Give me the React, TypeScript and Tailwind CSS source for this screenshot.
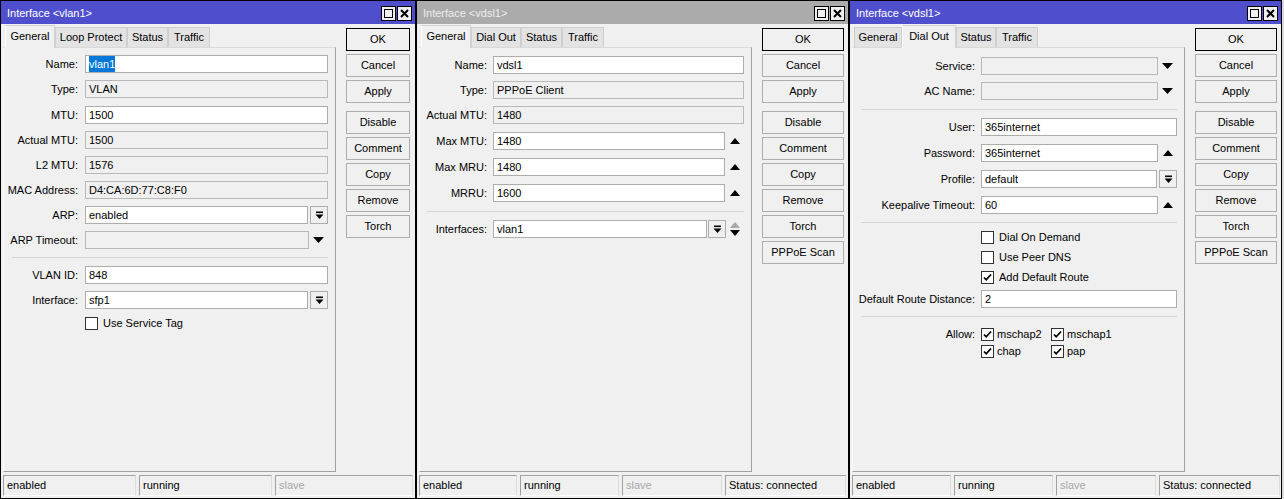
import React from "react";

const FONT = "font-['Liberation_Sans',Arial,sans-serif]";

// small glyphs used by the winbox style fields
function DropIcon() {
  return (
    <svg width="9" height="9" viewBox="0 0 9 9">
      <rect x="1" y="0.5" width="7" height="1.6" fill="#000" />
      <path d="M0.5 3.5h8L4.5 8z" fill="#000" />
    </svg>
  );
}

function DownTri() {
  return (
    <svg width="11" height="6" viewBox="0 0 11 6">
      <path d="M0 0h11L5.5 6z" fill="#000" />
    </svg>
  );
}

function UpTri() {
  return (
    <svg width="10" height="6" viewBox="0 0 10 6">
      <path d="M0 6h10L5 0z" fill="#000" />
    </svg>
  );
}

function UpDown() {
  return (
    <svg width="10" height="14" viewBox="0 0 10 14">
      <path d="M0 6h10L5 0z" fill="#a8a8a8" />
      <path d="M0 8h10L5 14z" fill="#000" />
    </svg>
  );
}

function Check({ on }: { on?: boolean }) {
  return (
    <div className="w-[13px] h-[13px] border border-[#333] bg-white flex items-center justify-center shrink-0">
      {on && (
        <svg width="9" height="9" viewBox="0 0 9 9">
          <path d="M1 4.5l2.2 2.3L8 1.5" stroke="#000" strokeWidth="1.8" fill="none" />
        </svg>
      )}
    </div>
  );
}

type Trail = "none" | "drop" | "tri" | "up" | "dropud";

type FieldProps = {
  label: string;
  value?: string;
  ro?: boolean;
  trail?: Trail;
  sel?: boolean;
  labelW: string;
  gap: string;
  mt: string;
};

function Field({ label, value, ro, trail = "none", sel, labelW, gap, mt }: FieldProps) {
  return (
    <div className={`flex items-center h-[18px] pr-[7px] ${mt}`}>
      <div className={`${labelW} text-right whitespace-nowrap shrink-0`}>{label}:</div>
      <div className={`flex-1 flex items-center ${gap}`}>
        <div
          className={`flex-1 h-[18px] border flex items-center px-[3px] whitespace-nowrap overflow-hidden ${
            ro ? "bg-[#f0f0f0] border-[#b9b9b9]" : "bg-white border-[#adadad]"
          }`}
        >
          {sel ? <span className="bg-[#0078d7] text-white">{value}</span> : value}
        </div>
        {trail === "drop" && (
          <div className="ml-[2px] w-[18px] h-[18px] border border-[#adadad] bg-[#f0f0f0] flex items-center justify-center">
            <DropIcon />
          </div>
        )}
        {trail === "tri" && (
          <div className="w-[19px] flex justify-center">
            <DownTri />
          </div>
        )}
        {trail === "up" && (
          <div className="w-[19px] flex justify-center">
            <UpTri />
          </div>
        )}
        {trail === "dropud" && (
          <>
            <div className="ml-[1px] w-[18px] h-[18px] border border-[#adadad] bg-[#f0f0f0] flex items-center justify-center">
              <DropIcon />
            </div>
            <div className="w-[18px] flex justify-center">
              <UpDown />
            </div>
          </>
        )}
      </div>
    </div>
  );
}

function Sep({ mt, ml }: { mt: string; ml: string }) {
  return <div className={`h-px bg-[#d6d6d6] mr-[7px] ${mt} ${ml}`} />;
}

type Tab = { label: string; w: string };

type WinProps = {
  title: string;
  active: boolean;
  w: string;
  tabs: Tab[];
  current: number;
  buttons: string[];
  btnW: string;
  status: { text: string; w: string; dim?: boolean }[];
  children: React.ReactNode;
};

function Win({ title, active, w, tabs, current, buttons, btnW, status, children }: WinProps) {
  return (
    <div className={`${w} h-[499px] shrink-0 flex flex-col border border-black bg-[#f0f0f0]`}>
      <div
        className={`h-[23px] flex items-center pl-[6px] pr-[3px] pt-[2px] ${
          active ? "bg-[#4f4fcd] text-white" : "bg-[#ababab] text-[#ededed]"
        }`}
      >
        <span className="flex-1">{title}</span>
        <div className="flex gap-px">
          <div className="w-[15px] h-[15px] bg-[#f0f0f0] border border-black flex items-center justify-center">
            <div className="w-[9px] h-[9px] border border-black" />
          </div>
          <div className="w-[15px] h-[15px] bg-[#f0f0f0] border border-black flex items-center justify-center">
            <svg width="9" height="9" viewBox="0 0 9 9">
              <path d="M1 1l7 7M8 1l-7 7" stroke="#000" strokeWidth="2" />
            </svg>
          </div>
        </div>
      </div>
      <div className="flex">
        <div className="ml-[2px] w-[333px] flex flex-col">
          <div className="h-[23px] flex items-end pl-[2px]">
            {tabs.map((t, i) =>
              i === current ? (
                <div
                  key={t.label}
                  className={`${t.w} h-[23px] -mb-px relative z-10 bg-[#f0f0f0] border border-b-0 border-[#d3d3d3] border-l-white flex items-center justify-center pb-[2px]`}
                >
                  {t.label}
                </div>
              ) : (
                <div
                  key={t.label}
                  className={`${t.w} h-[20px] bg-[#e3e3e3] border border-b-0 border-[#cfcfcf] flex items-center justify-center`}
                >
                  {t.label}
                </div>
              )
            )}
          </div>
          <div className="h-[425px] border border-[#d9d9d9] border-r-[#a0a0a0] border-b-[#a0a0a0] border-l-white flex flex-col">
            {children}
          </div>
        </div>
        <div className={`ml-[10px] mt-[4px] flex flex-col ${btnW}`}>
          {buttons.map((b, i) => (
            <div
              key={b}
              className={`h-[23px] flex items-center justify-center bg-[#f0f0f0] border ${
                i === 0 ? "border-black" : "border-[#adadad]"
              } ${i === 0 ? "" : i === 3 ? "mt-[8px]" : "mt-[3px]"}`}
            >
              {b}
            </div>
          ))}
        </div>
      </div>
      <div className="mt-[3px] flex gap-[3px] pl-[2px]">
        {status.map((s) => (
          <div
            key={s.text}
            className={`${s.w} h-[21px] border border-[#a0a0a0] border-b-white border-r-[#dcdcdc] flex items-center pl-[3px] ${
              s.dim ? "text-[#a8a8a8]" : ""
            }`}
          >
            {s.text}
          </div>
        ))}
      </div>
    </div>
  );
}

function VlanWindow() {
  const L = { labelW: "w-[74px]", gap: "ml-[7px]" };
  return (
    <Win
      title="Interface <vlan1>"
      active
      w="w-[416px]"
      tabs={[
        { label: "General", w: "w-[50px]" },
        { label: "Loop Protect", w: "w-[72px]" },
        { label: "Status", w: "w-[41px]" },
        { label: "Traffic", w: "w-[42px]" },
      ]}
      current={0}
      buttons={["OK", "Cancel", "Apply", "Disable", "Comment", "Copy", "Remove", "Torch"]}
      btnW="w-[64px]"
      status={[
        { text: "enabled", w: "w-[133px]" },
        { text: "running", w: "w-[133px]" },
        { text: "slave", w: "w-[138px]", dim: true },
      ]}
    >
      <Field {...L} mt="mt-[7px]" label="Name" value="vlan1" sel />
      <Field {...L} mt="mt-[7px]" label="Type" value="VLAN" ro />
      <Field {...L} mt="mt-[8px]" label="MTU" value="1500" />
      <Field {...L} mt="mt-[7px]" label="Actual MTU" value="1500" ro />
      <Field {...L} mt="mt-[7px]" label="L2 MTU" value="1576" ro />
      <Field {...L} mt="mt-[7px]" label="MAC Address" value="D4:CA:6D:77:C8:F0" ro />
      <Field {...L} mt="mt-[7px]" label="ARP" value="enabled" trail="drop" />
      <Field {...L} mt="mt-[7px]" label="ARP Timeout" value="" ro trail="tri" />
      <Sep mt="mt-[8px]" ml="ml-[8px]" />
      <Field {...L} mt="mt-[8px]" label="VLAN ID" value="848" />
      <Field {...L} mt="mt-[7px]" label="Interface" value="sfp1" trail="drop" />
      <div className="flex items-center h-[18px] mt-[5px] ml-[81px] gap-[5px]">
        <Check />
        <span>Use Service Tag</span>
      </div>
    </Win>
  );
}

function VdslGeneral() {
  const L = { labelW: "w-[67px]", gap: "ml-[6px]" };
  return (
    <Win
      title="Interface <vdsl1>"
      active={false}
      w="w-[433px]"
      tabs={[
        { label: "General", w: "w-[50px]" },
        { label: "Dial Out", w: "w-[50px]" },
        { label: "Status", w: "w-[41px]" },
        { label: "Traffic", w: "w-[42px]" },
      ]}
      current={0}
      buttons={["OK", "Cancel", "Apply", "Disable", "Comment", "Copy", "Remove", "Torch", "PPPoE Scan"]}
      btnW="w-[82px]"
      status={[
        { text: "enabled", w: "w-[98px]" },
        { text: "running", w: "w-[99px]" },
        { text: "slave", w: "w-[100px]", dim: true },
        { text: "Status: connected", w: "w-[121px]" },
      ]}
    >
      <Field {...L} mt="mt-[8px]" label="Name" value="vdsl1" />
      <Field {...L} mt="mt-[7px]" label="Type" value="PPPoE Client" ro />
      <Field {...L} mt="mt-[7px]" label="Actual MTU" value="1480" ro />
      <Field {...L} mt="mt-[8px]" label="Max MTU" value="1480" trail="up" />
      <Field {...L} mt="mt-[8px]" label="Max MRU" value="1480" trail="up" />
      <Field {...L} mt="mt-[8px]" label="MRRU" value="1600" trail="up" />
      <Sep mt="mt-[9px]" ml="ml-[7px]" />
      <Field {...L} mt="mt-[8px]" label="Interfaces" value="vlan1" trail="dropud" />
    </Win>
  );
}

function VdslDialOut() {
  const L = { labelW: "w-[122px]", gap: "ml-[6px]" };
  const indent = "ml-[128px]";
  return (
    <Win
      title="Interface <vdsl1>"
      active
      w="w-[433px]"
      tabs={[
        { label: "General", w: "w-[48px]" },
        { label: "Dial Out", w: "w-[54px]" },
        { label: "Status", w: "w-[40px]" },
        { label: "Traffic", w: "w-[42px]" },
      ]}
      current={1}
      buttons={["OK", "Cancel", "Apply", "Disable", "Comment", "Copy", "Remove", "Torch", "PPPoE Scan"]}
      btnW="w-[82px]"
      status={[
        { text: "enabled", w: "w-[99px]" },
        { text: "running", w: "w-[99px]" },
        { text: "slave", w: "w-[100px]", dim: true },
        { text: "Status: connected", w: "w-[121px]" },
      ]}
    >
      <Field {...L} mt="mt-[9px]" label="Service" value="" ro trail="tri" />
      <Field {...L} mt="mt-[7px]" label="AC Name" value="" ro trail="tri" />
      <Sep mt="mt-[9px]" ml="ml-[8px]" />
      <Field {...L} mt="mt-[8px]" label="User" value="365internet" />
      <Field {...L} mt="mt-[8px]" label="Password" value="365internet" trail="up" />
      <Field {...L} mt="mt-[8px]" label="Profile" value="default" trail="drop" />
      <Field {...L} mt="mt-[8px]" label="Keepalive Timeout" value="60" trail="up" />
      <Sep mt="mt-[8px]" ml="ml-[8px]" />
      <div className={`flex items-center h-[18px] mt-[5px] ${indent} gap-[5px]`}>
        <Check />
        <span>Dial On Demand</span>
      </div>
      <div className={`flex items-center h-[18px] mt-[2px] ${indent} gap-[5px]`}>
        <Check />
        <span>Use Peer DNS</span>
      </div>
      <div className={`flex items-center h-[18px] mt-[2px] ${indent} gap-[5px]`}>
        <Check on />
        <span>Add Default Route</span>
      </div>
      <Field {...L} mt="mt-[4px]" label="Default Route Distance" value="2" />
      <Sep mt="mt-[8px]" ml="ml-[8px]" />
      <div className="flex mt-[9px]">
        <div className="w-[122px] text-right h-[17px] flex items-center justify-end">Allow:</div>
        <div className="ml-[6px] grid grid-cols-[70px_80px]">
          {[["mschap2", "mschap1"], ["chap", "pap"]].flat().map((a) => (
            <div key={a} className="flex items-center h-[17px] gap-[3px]">
              <Check on />
              <span>{a}</span>
            </div>
          ))}
        </div>
      </div>
    </Win>
  );
}

export default function App() {
  return (
    <div className={`${FONT} text-[11px] text-black w-[1284px] h-[499px] overflow-hidden flex bg-[#d9d9d9]`}>
      <VlanWindow />
      <VdslGeneral />
      <VdslDialOut />
    </div>
  );
}
